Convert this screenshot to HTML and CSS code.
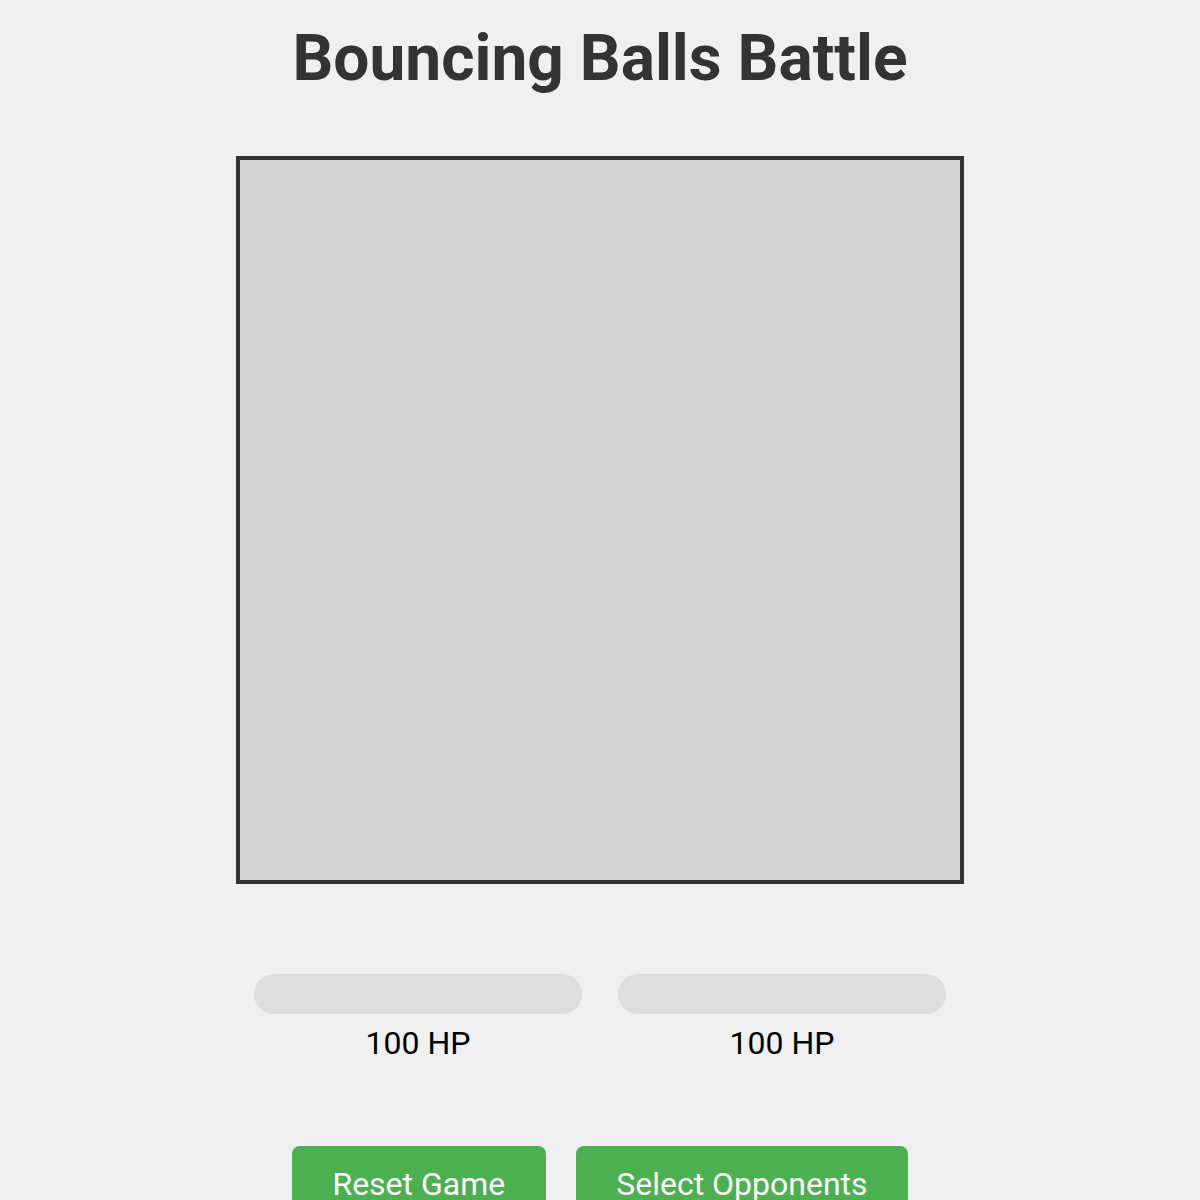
FILE: index.html
```html
<!DOCTYPE html>
<html>
<head>
<meta charset="utf-8">
<link rel="stylesheet" href="styles.css">
</head>
<body>
<h1 class="title">Bouncing Balls Battle</h1>
<div class="arena-wrap"><div class="arena"></div></div>
<div class="health-row">
  <div class="health">
    <div class="bar"></div>
    <div class="hp">100 HP</div>
  </div>
  <div class="health">
    <div class="bar"></div>
    <div class="hp">100 HP</div>
  </div>
</div>
<div class="controls">
  <button class="btn">Reset Game</button>
  <button class="btn">Select Opponents</button>
</div>
</body>
</html>
```
FILE: styles.css
```css
html, body {
  margin: 0;
  padding: 0;
}
body {
  background: #f0f0f0;
  font-family: Roboto, "Liberation Sans", sans-serif;
  overflow: hidden;
  height: 1200px;
}
.title {
  margin: 21px 0 0 0;
  font-size: 64px;
  font-weight: 700;
  color: #333;
  text-align: center;
  line-height: 75px;
}
.arena-wrap {
  display: flex;
  justify-content: center;
  margin-top: 60px;
}
.arena {
  width: 720px;
  height: 720px;
  border: 4px solid #333;
  background: #d3d3d3;
}
.health-row {
  display: flex;
  justify-content: center;
  gap: 36px;
  margin-top: 90px;
}
.health {
  width: 328px;
  display: flex;
  flex-direction: column;
  align-items: center;
}
.bar {
  width: 328px;
  height: 40px;
  border-radius: 20px;
  background: #ddd;
}
.hp {
  margin-top: 11px;
  font-size: 32px;
  line-height: 37.5px;
  color: #000;
}
.controls {
  display: flex;
  justify-content: center;
  gap: 30px;
  margin-top: 83px;
}
.btn {
  background: #4caf50;
  color: #fff;
  border: none;
  border-radius: 8px;
  padding: 20px 40.5px;
  font-family: Roboto, "Liberation Sans", sans-serif;
  font-size: 32px;
  line-height: 37.5px;
}
```
